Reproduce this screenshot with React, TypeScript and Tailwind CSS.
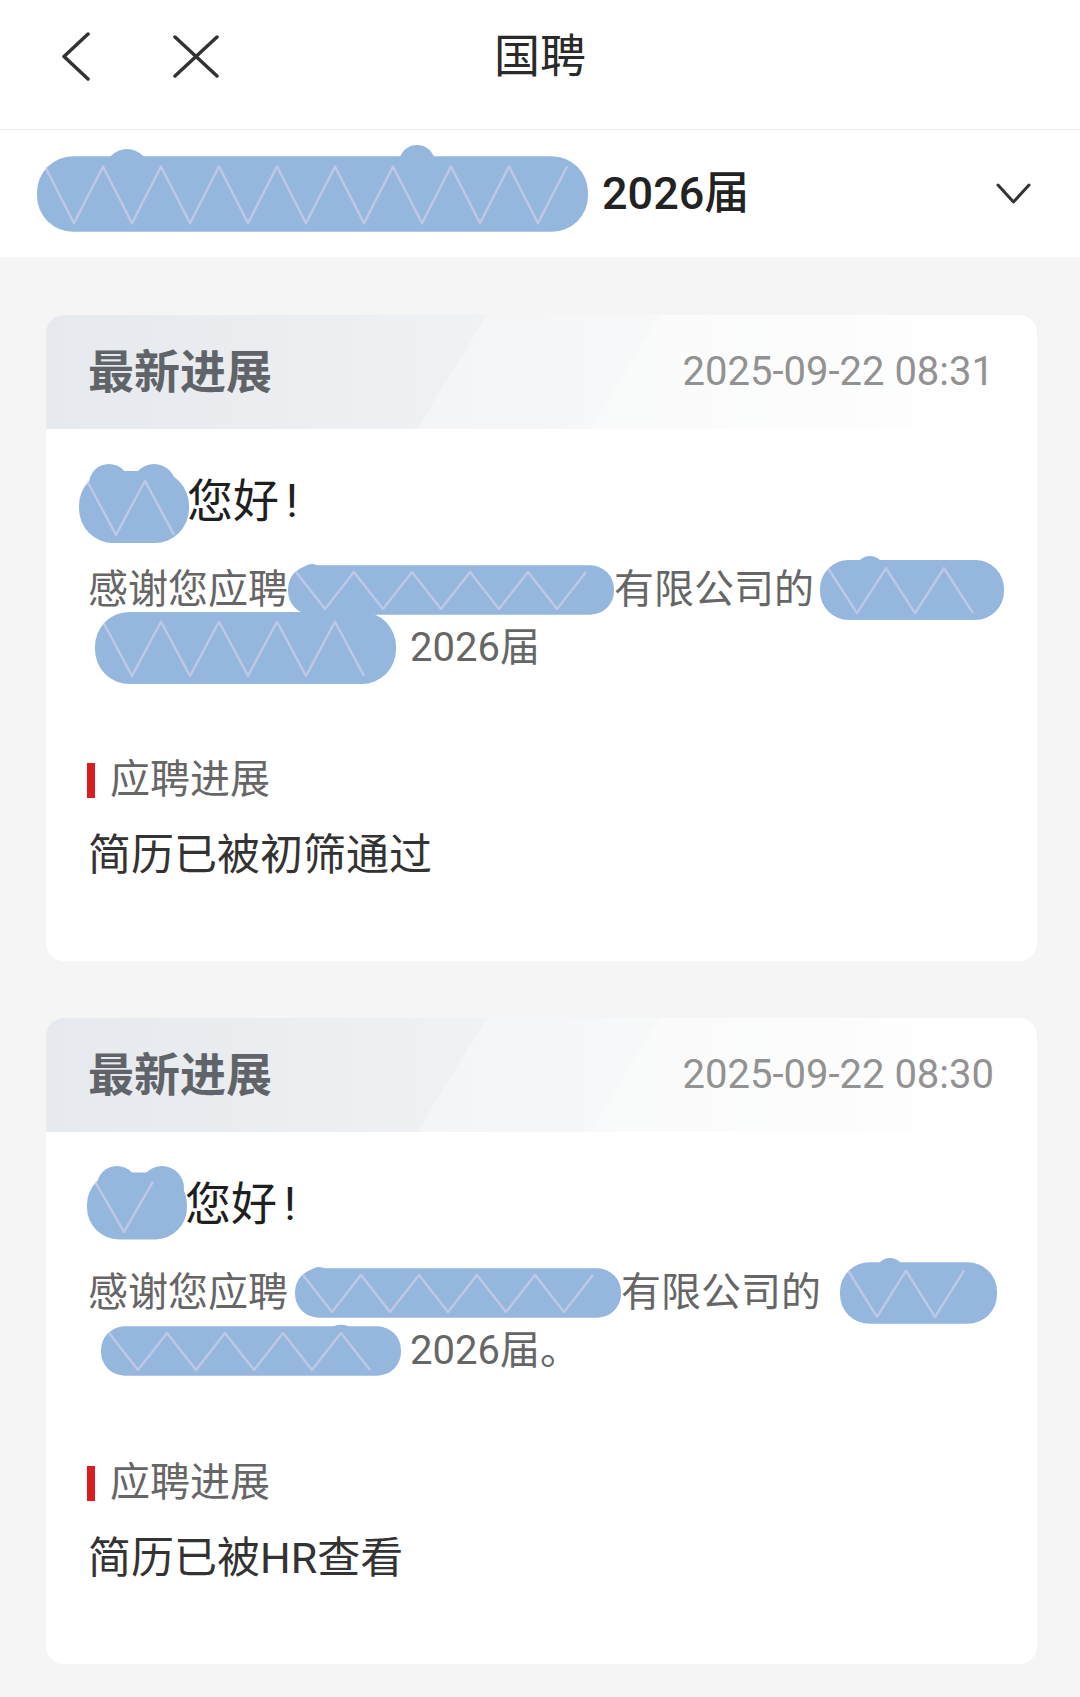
import React from "react";

type Bump = [number, number, number];

// redaction scribble: blue blob with faint zigzag streaks
function Blob({ w, h, bumps = [], className = "" }: { w: number; h: number; bumps?: Bump[]; className?: string }) {
  const step = 58;
  const pts: string[] = [];
  for (let x = 8, i = 0; x < w - 6; x += step / 2, i++) {
    pts.push(`${x},${i % 2 === 0 ? h * 0.18 : h * 0.84}`);
  }
  return (
    <svg width={w} height={h} viewBox={`0 0 ${w} ${h}`} className={`shrink-0 overflow-visible ${className}`}>
      <rect x={0} y={h * 0.06} width={w} height={h * 0.88} rx={h * 0.42} fill="#95b7de" />
      {bumps.map(([cx, cy, r], i) => (
        <circle key={i} cx={cx} cy={cy} r={r} fill="#95b7de" />
      ))}
      <polyline points={pts.join(" ")} fill="none" stroke="#efdcec" strokeOpacity={0.45} strokeWidth={2.5} strokeLinejoin="round" />
    </svg>
  );
}

type CardData = {
  time: string;
  hello: { w: number; h: number; ml: string; mt: string };
  line1: { b1ml: string; b1w: number; b2ml: string; b2w: number; b2h: number };
  line2: { bml: string; bw: number; bh: number; tail: string; tml: string };
  status: string;
};

const cards: CardData[] = [
  {
    time: "2025-09-22 08:31",
    hello: { w: 110, h: 82, ml: "-ml-[9px]", mt: "mt-[12px]" },
    line1: { b1ml: "ml-0", b1w: 326, b2ml: "ml-[6px]", b2w: 184, b2h: 68 },
    line2: { bml: "ml-[7px]", bw: 301, bh: 82, tail: "2026届", tml: "ml-[14px]" },
    status: "简历已被初筛通过",
  },
  {
    time: "2025-09-22 08:30",
    hello: { w: 100, h: 76, ml: "-ml-[1px]", mt: "mt-[4px]" },
    line1: { b1ml: "ml-[7px]", b1w: 326, b2ml: "ml-[19px]", b2w: 157, b2h: 70 },
    line2: { bml: "ml-[13px]", bw: 300, bh: 56, tail: "2026届。", tml: "ml-[9px]" },
    status: "简历已被HR查看",
  },
];

function ProgressCard({ c }: { c: CardData }) {
  return (
    <div className="ml-[46px] mr-[43px] rounded-[18px] bg-white overflow-hidden">
      <div className="relative h-[114px] flex items-center justify-between pl-[42px] pr-[43px] bg-gradient-to-r from-[#e6e9ed] via-[#f1f3f5] to-white">
        <div className="absolute inset-0 bg-white/30 [clip-path:polygon(441px_0,100%_0,100%_100%,371px_100%)]" />
        <div className="absolute inset-0 bg-white/40 [clip-path:polygon(614px_0,100%_0,100%_100%,544px_100%)]" />
        <span className="relative text-[46px] font-bold text-[#606469] leading-none">最新进展</span>
        <span className="relative text-[40px] text-[#929292] leading-none">{c.time}</span>
      </div>

      <div className="pl-[42px] pt-[42px] pb-[78px]">
        <div className="flex items-center h-[60px]">
          <Blob w={c.hello.w} h={c.hello.h} bumps={[[30, 18, 20], [75, 20, 22]]} className={`${c.hello.ml} ${c.hello.mt} -mr-[2px]`} />
          <span className="text-[46px] text-[#1f1f1f] leading-none">
            您好<span className="ml-[7px]">!</span>
          </span>
        </div>

        <div className="mt-[30px] flex items-center h-[58px] text-[40px] text-[#666] leading-none whitespace-nowrap">
          <span>感谢您应聘</span>
          <Blob w={c.line1.b1w} h={56} bumps={[[24, 14, 12]]} className={c.line1.b1ml} />
          <span>有限公司的</span>
          <Blob w={c.line1.b2w} h={c.line1.b2h} bumps={[[50, 14, 14]]} className={c.line1.b2ml} />
        </div>
        <div className="flex items-center h-[58px] text-[40px] text-[#666] leading-none whitespace-nowrap">
          <Blob w={c.line2.bw} h={c.line2.bh} bumps={[[240, c.line2.bh * 0.35, c.line2.bh * 0.32]]} className={c.line2.bml} />
          <span className={c.line2.tml}>{c.line2.tail}</span>
        </div>

        <div className="mt-[78px] flex items-center h-[50px]">
          <span className="w-[8px] h-[35px] bg-[#d81e1e] -ml-[1px]" />
          <span className="ml-[15px] text-[40px] text-[#666] leading-none">应聘进展</span>
        </div>
        <div className="mt-[22px] flex items-center h-[56px]">
          <span className="text-[43px] text-[#333] leading-none">{c.status}</span>
        </div>
      </div>
    </div>
  );
}

export default function App() {
  return (
    <div className="min-h-[1697px] bg-[#f5f5f5] font-['Roboto','Noto_Sans_CJK_SC',sans-serif]">
      {/* title bar */}
      <div className="bg-white h-[130px] border-b border-[#ececec]">
        <div className="grid grid-cols-[1fr_auto_1fr] items-center h-[112px]">
          <div className="flex items-center pl-[62px] gap-[83px]">
            <svg width="28" height="49" viewBox="0 0 28 49" fill="none" stroke="#333" strokeWidth="3.5" strokeLinecap="round" strokeLinejoin="round">
              <polyline points="26,2 2,24.5 26,47" />
            </svg>
            <svg width="46" height="43" viewBox="0 0 46 43" fill="none" stroke="#333" strokeWidth="3.5" strokeLinecap="round">
              <line x1="2" y1="2" x2="44" y2="41" />
              <line x1="44" y1="2" x2="2" y2="41" />
            </svg>
          </div>
          <span className="text-[46px] text-[#2a2a2a] leading-none">国聘</span>
          <div />
        </div>
      </div>

      {/* position selector */}
      <div className="bg-white h-[127px] flex items-center pl-[37px] pr-[49px]">
        <Blob w={551} h={86} bumps={[[90, 20, 22], [380, 12, 18], [470, 26, 20]]} />
        <span className="ml-[14px] text-[45px] font-medium text-[#222] leading-none">2026届</span>
        <svg className="ml-auto" width="35" height="21" viewBox="0 0 35 21" fill="none" stroke="#333" strokeWidth="3" strokeLinecap="round" strokeLinejoin="round">
          <polyline points="2,2 17.5,19 33,2" />
        </svg>
      </div>

      <div className="pt-[58px] pb-[32px] flex flex-col gap-[57px]">
        {cards.map((c) => (
          <ProgressCard key={c.time} c={c} />
        ))}
      </div>
    </div>
  );
}
